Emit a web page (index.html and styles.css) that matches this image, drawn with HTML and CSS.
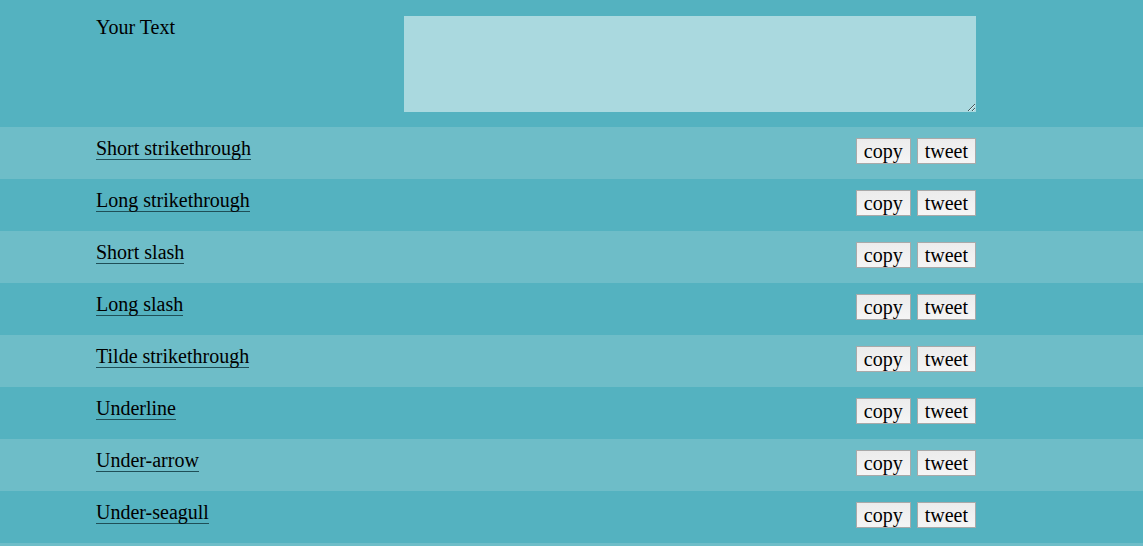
FILE: index.html
```html
<!DOCTYPE html>
<html>
<head>
<meta charset="utf-8">
<link rel="stylesheet" href="styles.css">
</head>
<body>
<div class="head">
  <div class="inner">
    <label class="label">Your Text</label>
    <textarea class="input"></textarea>
  </div>
</div>
<div class="rows">
  <div class="row odd"><div class="inner"><a class="name" href="#">Short strikethrough</a><div class="btns"><button class="btn copy">copy</button><button class="btn tweet">tweet</button></div></div></div>
  <div class="row"><div class="inner"><a class="name" href="#">Long strikethrough</a><div class="btns"><button class="btn copy">copy</button><button class="btn tweet">tweet</button></div></div></div>
  <div class="row odd"><div class="inner"><a class="name" href="#">Short slash</a><div class="btns"><button class="btn copy">copy</button><button class="btn tweet">tweet</button></div></div></div>
  <div class="row"><div class="inner"><a class="name" href="#">Long slash</a><div class="btns"><button class="btn copy">copy</button><button class="btn tweet">tweet</button></div></div></div>
  <div class="row odd"><div class="inner"><a class="name" href="#">Tilde strikethrough</a><div class="btns"><button class="btn copy">copy</button><button class="btn tweet">tweet</button></div></div></div>
  <div class="row"><div class="inner"><a class="name" href="#">Underline</a><div class="btns"><button class="btn copy">copy</button><button class="btn tweet">tweet</button></div></div></div>
  <div class="row odd"><div class="inner"><a class="name" href="#">Under-arrow</a><div class="btns"><button class="btn copy">copy</button><button class="btn tweet">tweet</button></div></div></div>
  <div class="row"><div class="inner"><a class="name" href="#">Under-seagull</a><div class="btns"><button class="btn copy">copy</button><button class="btn tweet">tweet</button></div></div></div>
  <div class="row odd"></div>
</div>
</body>
</html>
```
FILE: styles.css
```css
html, body {
  margin: 0;
  padding: 0;
  background: #54b2c0;
  font-family: "Liberation Serif", "Times New Roman", serif;
  font-size: 20px;
  color: #000;
  overflow: hidden;
}
.inner {
  margin-left: 96px;
  width: 880px;
  display: flex;
  justify-content: space-between;
}
.head {
  height: 127px;
  padding-top: 16px;
  box-sizing: border-box;
}
.label {
  line-height: 22px;
}
.input {
  width: 572px;
  height: 96px;
  box-sizing: border-box;
  margin: 0;
  background: #aad9df;
  border: none;
  padding: 2px;
  font: inherit;
}
.row {
  height: 52px;
  box-sizing: border-box;
  padding-top: 11px;
  background: #54b2c0;
}
.row.odd {
  background: #6ebdc8;
}
.name {
  color: #000;
  text-decoration: none;
  border-bottom: 1px solid #1f4f57;
  line-height: 21px;
  height: 21px;
}
.btns {
  display: flex;
  gap: 6px;
}
.btn {
  font-family: "Liberation Serif", "Times New Roman", serif;
  font-size: 20px;
  height: 26px;
  padding: 0 7px;
  background: linear-gradient(#ececec, #f5f5f5);
  border: 1px solid #a9a9a9;
  border-radius: 0;
  color: #000;
  line-height: 24px;
}
```
